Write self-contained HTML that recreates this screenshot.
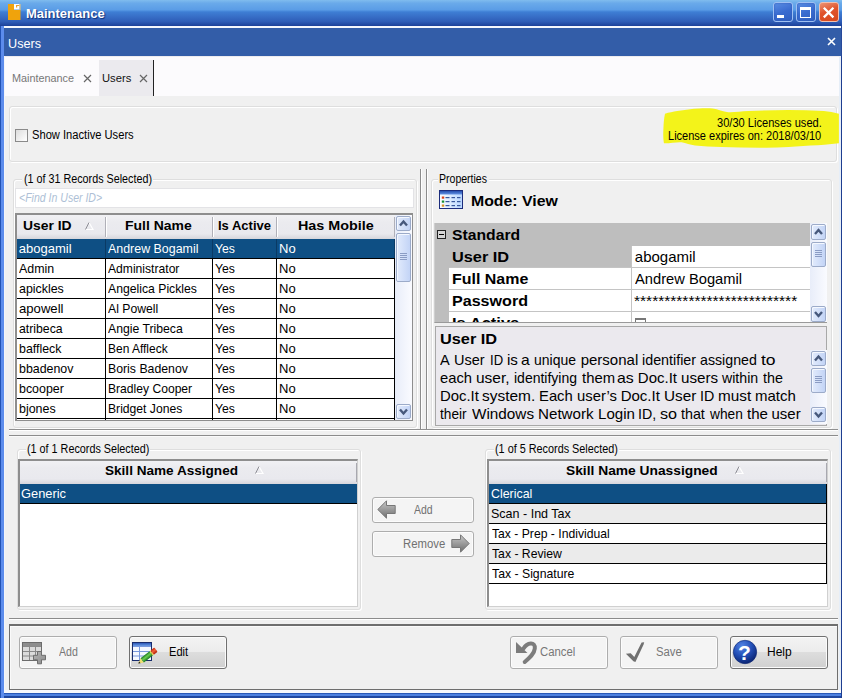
<!DOCTYPE html>
<html><head><meta charset="utf-8"><title>Maintenance</title>
<style>
*{box-sizing:border-box;margin:0;padding:0}
html,body{width:842px;height:698px;overflow:hidden}
body{position:relative;background:#f0f0f0;font-family:"Liberation Sans",sans-serif;font-size:12px;color:#000}
.a{position:absolute}
.t{position:absolute;white-space:nowrap;line-height:1;transform-origin:0 0}
#frame{left:0;top:0;width:842px;height:698px;background:#f0f0f0}
#title{left:0;top:0;width:842px;height:26px;background:linear-gradient(#80bcee 0,#6aaaea 12%,#5a9ce6 38%,#3e7ed4 46%,#3870c8 62%,#2f5eb8 82%,#2149a2 95%,#1c4098 100%)}
#client{left:5px;top:28px;width:834px;height:662px;background:#f0f0f0}
#bluebar{left:3.5px;top:28px;width:837.5px;height:28px;background:#335da8}
#tabs{left:4px;top:56px;width:836px;height:40px;background:#fcfbfd}
.grp{position:absolute;border:1px solid #dedede;border-radius:3px;box-shadow:inset 1px 1px 0 #fff, 1px 1px 0 #fff}
.lbl{position:absolute;background:#f0f0f0;height:12px}
.hdr{position:absolute;background:linear-gradient(#f1f1f4 0,#ebebef 30%,#e9e9ee 78%,#d6d6dc 100%)}
.sb{position:absolute;background:linear-gradient(90deg,#e8edf9,#fafbff)}
.sbb{position:absolute;background:linear-gradient(90deg,#e2ebfc,#c3d4f6);border:1px solid #9cabc9;border-radius:2px;box-shadow:inset 1px 1px 0 #f4f8ff}
.grip{position:absolute;width:7px;height:7px;background:repeating-linear-gradient(#8a9cc4 0 1px,transparent 1px 2px)}
.btn{position:absolute;border:1px solid #adadad;border-radius:3px;background:#f4f4f4;box-shadow:inset 0 0 0 1px #fcfcfc}
.btn.en{border-color:#707070;background:linear-gradient(#f3f3f3 0,#ececec 47%,#dddddd 50%,#d0d0d0 100%);box-shadow:inset 0 0 0 1px #fbfbfb}
</style></head><body>
<div class="a" id="frame"></div>
<div class="a" id="title"></div>
<div class="a" style="left:3.5px;top:26px;width:837.5px;height:2px;background:#f4f7fd"></div>
<div class="a" id="client"></div>
<div class="a" id="bluebar"></div>
<div class="a" id="tabs"></div>
<div class="a" style="left:5px;top:56px;width:834px;height:1px;background:#ecebef"></div>
<div class="a" style="left:0;top:26px;width:3.5px;height:672px;background:linear-gradient(90deg,#2252b4 0,#2252b4 1.2px,#5c8cec 1.4px,#5c8cec 3.5px)"></div>
<div class="a" style="left:3.5px;top:56px;width:1.5px;height:636px;background:#f2f5fb"></div>
<div class="a" style="left:839px;top:56px;width:3px;height:642px;background:linear-gradient(90deg,#e6eef8 0,#e6eef8 1.6px,#1e3e90 1.9px,#1e3e90 3px)"></div>
<div class="a" style="left:840.6px;top:26px;width:1.4px;height:30px;background:#27499a"></div>
<div class="a" style="left:0;top:690px;width:842px;height:8px;background:linear-gradient(#f6f8fc 0,#f6f8fc 2.6px,#2858b8 2.9px,#2858b8 3.6px,#4c80e0 4px,#4c80e0 5.8px,#1f47a0 6.4px,#1f47a0 8px)"></div>
<div class="a" style="left:0;top:690px;width:3.5px;height:8px;background:linear-gradient(90deg,#2252b4 0,#2252b4 1.2px,#5c8cec 1.4px)"></div>
<div class="a" style="left:841px;top:690px;width:1px;height:8px;background:#1e3e90"></div>
<svg class="a" style="left:8px;top:4px" width="13" height="16" viewBox="0 0 13 16"><path d="M0 0h6v6h6.500v10H0z" fill="#f0a30c"/><path d="M6 0h5.500v5.500H6z" fill="#fdfdfd"/><path d="M8 1h3.500v1H9.200v1.500H8z" fill="#e8a030"/><path d="M11.500 0h1v6h-1z" fill="#f6c870"/></svg>
<div class="t" style="left:25.90px;top:7.00px;font-size:13px;font-weight:bold;color:#fff;text-shadow:1px 1px 1px #10307a;">Maintenance</div>
<div class="a" style="left:773px;top:2px;width:20px;height:20px;border:1px solid #9fc0f2;border-radius:3px;background:linear-gradient(160deg,#5a8ee4 0,#3a6cd0 50%,#2f5fc0 100%);box-shadow:inset 0 0 2px #2a55b0"></div>
<div class="a" style="left:796px;top:2px;width:20px;height:20px;border:1px solid #9fc0f2;border-radius:3px;background:linear-gradient(160deg,#5a8ee4 0,#3a6cd0 50%,#2f5fc0 100%);box-shadow:inset 0 0 2px #2a55b0"></div>
<div class="a" style="left:777px;top:15px;width:7px;height:3px;background:#fff"></div>
<div class="a" style="left:800px;top:7px;width:11px;height:11px;border:1px solid #fff;border-top-width:3px"></div>
<div class="a" style="left:819px;top:2px;width:20px;height:20px;border:1px solid #f0c0b0;border-radius:3px;background:linear-gradient(160deg,#ec9474 0,#e0542c 45%,#d8481c 100%)"></div>
<svg class="a" style="left:819px;top:2px" width="20" height="20"><path d="M4.800 5.800l9.600 9.600M14.400 5.800l-9.600 9.600" stroke="#fff" stroke-width="2.300"/></svg>
<div class="t" style="left:7.73px;top:37.00px;font-size:13px;transform:scaleX(0.9727);color:#fff;">Users</div>
<svg class="a" style="left:827px;top:37px" width="9" height="9"><path d="M1 1l7 7M8 1l-7 7" stroke="#fff" stroke-width="1.6"/></svg>
<div class="a" style="left:99px;top:60px;width:54px;height:36px;background:#ebeaee"></div>
<div class="a" style="left:153px;top:60px;width:1px;height:36px;background:#222"></div>
<div class="t" style="left:12.02px;top:72.50px;font-size:11px;transform:scaleX(0.9839);color:#777;">Maintenance</div>
<svg class="a" style="left:83px;top:74px" width="9" height="9"><path d="M1 1l7 7M8 1l-7 7" stroke="#666" stroke-width="1.2"/></svg>
<div class="t" style="left:102.48px;top:72.50px;font-size:11px;transform:scaleX(1.0185);color:#111;">Users</div>
<svg class="a" style="left:139px;top:74px" width="9" height="9"><path d="M1 1l7 7M8 1l-7 7" stroke="#666" stroke-width="1.2"/></svg>
<div class="grp" style="left:9px;top:106px;width:828px;height:56px"></div>
<div class="a" style="left:15px;top:129px;width:13px;height:13px;border:1px solid #8a8a8a;background:linear-gradient(135deg,#dcdcdc,#fff)"></div>
<div class="t" style="left:31.67px;top:129.00px;font-size:12px;transform:scaleX(0.9296);">Show Inactive Users</div>
<svg class="a" style="left:660px;top:104px" width="182" height="48" viewBox="660 104 182 48"><path d="M665 113.800C669 112.500 673 111.800 677.200 111.100C685 109.800 692 108.700 699.400 108.400C704 108.200 708 108.200 712.700 108.400C718 109 723 111.800 728.300 112.200C735 112.400 741 111.400 748.300 111.100C761 110.500 775 110.200 788.200 110C800 110 812 110.500 823.800 111.100C829 111.600 834 112.600 838.900 113.800L838.900 143.300C829 144.500 820 145.200 810.500 145.500C796 146.500 781 147.500 766 147.700C751 147.800 736 147.500 721.600 147.100C712 146.800 703 146.400 695 145.500C690 144.800 686 143 681.600 142.200C676 141.800 670 143.500 663.900 143.300C663 138 663.200 133 663.400 128.900C663.600 124 664 118 665 113.800Z" fill="#f3f31a"/></svg>
<div class="t" style="left:716.68px;top:117.00px;font-size:12px;transform:scaleX(0.9243);">30/30 Licenses used.</div>
<div class="t" style="left:667.98px;top:130.00px;font-size:12px;transform:scaleX(0.9188);">License expires on: 2018/03/10</div>
<div class="grp" style="left:13px;top:179px;width:404px;height:249px"></div>
<div class="lbl" style="left:22px;top:173px;width:131px"></div>
<div class="t" style="left:23.70px;top:173.00px;font-size:12px;transform:scaleX(0.8965);">(1 of 31 Records Selected)</div>
<div class="a" style="left:15px;top:188px;width:399px;height:20px;background:#fff;border:1px solid #e3e3e6"></div>
<div class="t" style="left:18.92px;top:192.00px;font-size:12px;transform:scaleX(0.8777);font-style:italic;color:#aebfd6;">&lt;Find In User ID&gt;</div>
<div class="a" style="left:15px;top:213px;width:398px;height:208px;background:#fff;border:1px solid #8e8e8e;border-top:2px solid #8e8e8e;border-left:2px solid #8e8e8e"></div>
<div class="hdr" style="left:17px;top:215px;width:378px;height:24px"></div>
<div class="a" style="left:105px;top:217px;width:1px;height:20px;background:#b0b0b8"></div>
<div class="a" style="left:106px;top:217px;width:1px;height:20px;background:#fff"></div>
<div class="a" style="left:212px;top:217px;width:1px;height:20px;background:#b0b0b8"></div>
<div class="a" style="left:213px;top:217px;width:1px;height:20px;background:#fff"></div>
<div class="a" style="left:276px;top:217px;width:1px;height:20px;background:#b0b0b8"></div>
<div class="a" style="left:277px;top:217px;width:1px;height:20px;background:#fff"></div>
<div class="a" style="left:394px;top:217px;width:1px;height:20px;background:#b0b0b8"></div>
<div class="a" style="left:395px;top:217px;width:1px;height:20px;background:#fff"></div>
<div class="t" style="left:22.93px;top:219.00px;font-size:13px;transform:scaleX(1.0682);font-weight:bold;">User ID</div>
<div class="t" style="left:125.43px;top:219.00px;font-size:13px;transform:scaleX(1.0738);font-weight:bold;">Full Name</div>
<div class="t" style="left:218.00px;top:219.00px;font-size:13px;font-weight:bold;">Is Active</div>
<div class="t" style="left:297.90px;top:219.00px;font-size:13px;transform:scaleX(1.1045);font-weight:bold;">Has Mobile</div>
<svg class="a" style="left:84px;top:220.500px" width="10" height="10"><path d="M5 1.500L9 8.500H1.500" fill="none" stroke="#fff" stroke-width="1.200"/><path d="M1.500 8.500L5 1.500" fill="none" stroke="#8c8c94" stroke-width="1"/></svg>
<div class="a" style="left:17px;top:239px;width:378px;height:19px;background:#0e4f84"></div>
<div class="a" style="left:17px;top:258px;width:378px;height:1px;background:#000"></div>
<div class="t" style="left:18.80px;top:242.00px;font-size:13px;color:#fff;">abogamil</div>
<div class="t" style="left:107.90px;top:242.00px;font-size:13px;transform:scaleX(0.9553);color:#fff;">Andrew Bogamil</div>
<div class="t" style="left:214.66px;top:242.00px;font-size:13px;transform:scaleX(0.9400);color:#fff;">Yes</div>
<div class="t" style="left:279.00px;top:242.00px;font-size:13px;color:#fff;">No</div>
<div class="a" style="left:17px;top:278px;width:378px;height:1px;background:#000"></div>
<div class="t" style="left:18.90px;top:262.00px;font-size:13px;transform:scaleX(0.9528);">Admin</div>
<div class="t" style="left:107.90px;top:262.00px;font-size:13px;transform:scaleX(0.9325);">Administrator</div>
<div class="t" style="left:214.66px;top:262.00px;font-size:13px;transform:scaleX(0.9400);">Yes</div>
<div class="t" style="left:279.00px;top:262.00px;font-size:13px;">No</div>
<div class="a" style="left:17px;top:298px;width:378px;height:1px;background:#000"></div>
<div class="t" style="left:18.85px;top:282.00px;font-size:13px;transform:scaleX(0.9543);">apickles</div>
<div class="t" style="left:107.90px;top:282.00px;font-size:13px;transform:scaleX(0.9394);">Angelica Pickles</div>
<div class="t" style="left:214.66px;top:282.00px;font-size:13px;transform:scaleX(0.9400);">Yes</div>
<div class="t" style="left:279.00px;top:282.00px;font-size:13px;">No</div>
<div class="a" style="left:17px;top:318px;width:378px;height:1px;background:#000"></div>
<div class="t" style="left:18.79px;top:302.00px;font-size:13px;transform:scaleX(1.0095);">apowell</div>
<div class="t" style="left:107.90px;top:302.00px;font-size:13px;transform:scaleX(0.9396);">Al Powell</div>
<div class="t" style="left:214.66px;top:302.00px;font-size:13px;transform:scaleX(0.9400);">Yes</div>
<div class="t" style="left:279.00px;top:302.00px;font-size:13px;">No</div>
<div class="a" style="left:17px;top:338px;width:378px;height:1px;background:#000"></div>
<div class="t" style="left:18.86px;top:322.00px;font-size:13px;transform:scaleX(0.9422);">atribeca</div>
<div class="t" style="left:107.90px;top:322.00px;font-size:13px;transform:scaleX(0.9405);">Angie Tribeca</div>
<div class="t" style="left:214.66px;top:322.00px;font-size:13px;transform:scaleX(0.9400);">Yes</div>
<div class="t" style="left:279.00px;top:322.00px;font-size:13px;">No</div>
<div class="a" style="left:17px;top:358px;width:378px;height:1px;background:#000"></div>
<div class="t" style="left:18.85px;top:342.00px;font-size:13px;transform:scaleX(0.9512);">baffleck</div>
<div class="t" style="left:107.88px;top:342.00px;font-size:13px;transform:scaleX(0.9203);">Ben Affleck</div>
<div class="t" style="left:214.66px;top:342.00px;font-size:13px;transform:scaleX(0.9400);">Yes</div>
<div class="t" style="left:279.00px;top:342.00px;font-size:13px;">No</div>
<div class="a" style="left:17px;top:378px;width:378px;height:1px;background:#000"></div>
<div class="t" style="left:18.85px;top:362.00px;font-size:13px;transform:scaleX(0.9536);">bbadenov</div>
<div class="t" style="left:107.86px;top:362.00px;font-size:13px;transform:scaleX(0.9446);">Boris Badenov</div>
<div class="t" style="left:214.66px;top:362.00px;font-size:13px;transform:scaleX(0.9400);">Yes</div>
<div class="t" style="left:279.00px;top:362.00px;font-size:13px;">No</div>
<div class="a" style="left:17px;top:398px;width:378px;height:1px;background:#000"></div>
<div class="t" style="left:18.85px;top:382.00px;font-size:13px;transform:scaleX(0.9543);">bcooper</div>
<div class="t" style="left:107.87px;top:382.00px;font-size:13px;transform:scaleX(0.9315);">Bradley Cooper</div>
<div class="t" style="left:214.66px;top:382.00px;font-size:13px;transform:scaleX(0.9400);">Yes</div>
<div class="t" style="left:279.00px;top:382.00px;font-size:13px;">No</div>
<div class="a" style="left:17px;top:418px;width:378px;height:1px;background:#000"></div>
<div class="t" style="left:18.84px;top:402.00px;font-size:13px;transform:scaleX(0.9568);">bjones</div>
<div class="t" style="left:107.87px;top:402.00px;font-size:13px;transform:scaleX(0.9346);">Bridget Jones</div>
<div class="t" style="left:214.66px;top:402.00px;font-size:13px;transform:scaleX(0.9400);">Yes</div>
<div class="t" style="left:279.00px;top:402.00px;font-size:13px;">No</div>
<div class="a" style="left:105px;top:259px;width:1px;height:161px;background:#000"></div>
<div class="a" style="left:105px;top:239px;width:1px;height:19px;background:#0a3a64"></div>
<div class="a" style="left:212px;top:259px;width:1px;height:161px;background:#000"></div>
<div class="a" style="left:212px;top:239px;width:1px;height:19px;background:#0a3a64"></div>
<div class="a" style="left:276px;top:259px;width:1px;height:161px;background:#000"></div>
<div class="a" style="left:276px;top:239px;width:1px;height:19px;background:#0a3a64"></div>
<div class="a" style="left:394px;top:259px;width:1px;height:161px;background:#000"></div>
<div class="a" style="left:394px;top:239px;width:1px;height:19px;background:#0a3a64"></div>
<div class="sb" style="left:395px;top:215px;width:17px;height:205px"></div>
<div class="sbb" style="left:396px;top:216px;width:15px;height:15px"></div>
<svg class="a" style="left:396px;top:216px" width="15" height="15"><path d="M4 9.5l3.5-4 3.5 4" fill="none" stroke="#47597c" stroke-width="2.400"/></svg>
<div class="sbb" style="left:396px;top:233px;width:15px;height:49px"></div>
<div class="grip" style="left:400px;top:253px"></div>
<div class="sbb" style="left:396px;top:404px;width:15px;height:15px"></div>
<svg class="a" style="left:396px;top:404px" width="15" height="15"><path d="M4 5.5l3.5 4 3.5-4" fill="none" stroke="#47597c" stroke-width="2.400"/></svg>
<div class="a" style="left:420px;top:169px;width:2px;height:260px;background:linear-gradient(90deg,#8c8c8c 50%,#fff 50%)"></div>
<div class="a" style="left:426px;top:169px;width:2px;height:260px;background:linear-gradient(90deg,#8c8c8c 50%,#fff 50%)"></div>
<div class="a" style="left:9px;top:429px;width:829px;height:2px;background:linear-gradient(#909090 50%,#fff 50%)"></div>
<div class="a" style="left:9px;top:435px;width:829px;height:2px;background:linear-gradient(#8c8c8c 50%,#fafafa 50%)"></div>
<div class="grp" style="left:431px;top:179px;width:401px;height:249px"></div>
<div class="lbl" style="left:438px;top:173px;width:51px"></div>
<div class="t" style="left:439.12px;top:173.00px;font-size:12px;transform:scaleX(0.8774);">Properties</div>
<svg class="a" style="left:439px;top:190px" width="24" height="19" viewBox="0 0 24 19"><defs><linearGradient id="mh" x1="0" y1="0" x2="0" y2="1"><stop offset="0" stop-color="#2850b0"/><stop offset="1" stop-color="#6494e4"/></linearGradient><linearGradient id="mb" x1="0" y1="0" x2="1" y2="0"><stop offset="0" stop-color="#ffffff"/><stop offset="1" stop-color="#b8d6ff"/></linearGradient></defs><rect x="0.5" y="0.5" width="23" height="18" fill="url(#mb)" stroke="#1c2c7c"/><rect x="1" y="1" width="22" height="3.500" fill="url(#mh)"/><g fill="#38589c"><rect x="6.500" y="7" width="4" height="1.200"/><rect x="12.500" y="7" width="3.500" height="1.200"/><rect x="18" y="7" width="3.500" height="1.200"/><rect x="6.500" y="11" width="4" height="1.200"/><rect x="12.500" y="11" width="3.500" height="1.200"/><rect x="18" y="11" width="3.500" height="1.200"/><rect x="6.500" y="15" width="4" height="1.200"/><rect x="12.500" y="15" width="3.500" height="1.200"/><rect x="18" y="15" width="3.500" height="1.200"/></g><rect x="2.800" y="6.500" width="2.400" height="2.200" fill="#d84018"/><rect x="2.800" y="10.500" width="2.400" height="2.200" fill="#189030"/><rect x="2.800" y="14.500" width="2.400" height="2.200" fill="#d89020"/></svg>
<div class="t" style="left:470.94px;top:193.00px;font-size:15px;transform:scaleX(1.0556);font-weight:bold;">Mode: View</div>
<div class="a" style="left:434px;top:223px;width:393px;height:100px;background:#bebebe;border-bottom:1px solid #9a9a9a;border-right:1px solid #9a9a9a;border-left:1px solid #cfcfcf"></div>
<div class="a" style="left:449px;top:268px;width:361px;height:54px;background:#fff"></div>
<div class="a" style="left:632px;top:246px;width:178px;height:22px;background:#fff"></div>
<div class="a" style="left:449px;top:267px;width:361px;height:1px;background:#c4c4c4"></div>
<div class="a" style="left:449px;top:289px;width:361px;height:1px;background:#c4c4c4"></div>
<div class="a" style="left:449px;top:311px;width:361px;height:1px;background:#c4c4c4"></div>
<div class="a" style="left:631px;top:246px;width:1px;height:76px;background:#c4c4c4"></div>
<div class="a" style="left:437px;top:230px;width:9px;height:9px;border:1px solid #222;background:#d6d6d6"></div>
<div class="a" style="left:439px;top:234px;width:5px;height:1px;background:#000"></div>
<div class="t" style="left:451.95px;top:227.00px;font-size:15px;transform:scaleX(1.0476);font-weight:bold;">Standard</div>
<div class="t" style="left:451.91px;top:249.00px;font-size:15px;transform:scaleX(1.0882);font-weight:bold;">User ID</div>
<div class="t" style="left:451.94px;top:271.00px;font-size:15px;transform:scaleX(1.0643);font-weight:bold;">Full Name</div>
<div class="t" style="left:451.93px;top:293.00px;font-size:15px;transform:scaleX(1.0725);font-weight:bold;">Password</div>
<div class="a" style="left:449px;top:312px;width:182px;height:10px;overflow:hidden">
<div class="t" style="left:2.90px;top:3.00px;font-size:15px;transform:scaleX(1.1000);font-weight:bold;">Is Active</div>
</div>
<div class="t" style="left:634.80px;top:249.00px;font-size:15px;">abogamil</div>
<div class="t" style="left:635.20px;top:271.00px;font-size:15px;transform:scaleX(0.9798);">Andrew Bogamil</div>
<div class="t" style="left:633.96px;top:293.00px;font-size:15px;transform:scaleX(1.0353);">***************************</div>
<div class="a" style="left:635px;top:318px;width:11px;height:4px;border:1px solid #777;border-bottom:0;border-top-width:2px;background:#fff"></div>
<div class="sb" style="left:810px;top:223px;width:17px;height:99px"></div>
<div class="sbb" style="left:811px;top:224px;width:15px;height:16px"></div>
<svg class="a" style="left:811px;top:224px" width="15" height="16"><path d="M4 10.0l3.5-4 3.5 4" fill="none" stroke="#47597c" stroke-width="2.400"/></svg>
<div class="sbb" style="left:811px;top:242px;width:15px;height:25px"></div>
<div class="grip" style="left:815px;top:250px"></div>
<div class="sbb" style="left:811px;top:306px;width:15px;height:16px"></div>
<svg class="a" style="left:811px;top:306px" width="15" height="16"><path d="M4 6.0l3.5 4 3.5-4" fill="none" stroke="#47597c" stroke-width="2.400"/></svg>
<div class="a" style="left:435px;top:326px;width:392px;height:100px;background:#ebe9ee;border:1px solid #a8a8a8"></div>
<div class="t" style="left:439.91px;top:331.00px;font-size:15px;transform:scaleX(1.0882);font-weight:bold;">User ID</div>
<div>
<div class="t" style="left:440.10px;top:352.00px;font-size:15px;transform:scaleX(0.9700);">A</div>
<div class="t" style="left:453.93px;top:352.00px;font-size:15px;transform:scaleX(0.9677);">User</div>
<div class="t" style="left:489.53px;top:352.00px;font-size:15px;transform:scaleX(0.8714);">ID</div>
<div class="t" style="left:506.69px;top:352.00px;font-size:15px;transform:scaleX(1.0111);">is</div>
<div class="t" style="left:521.46px;top:352.00px;font-size:15px;transform:scaleX(1.0429);">a</div>
<div class="t" style="left:534.07px;top:352.00px;font-size:15px;transform:scaleX(0.9318);">unique</div>
<div class="t" style="left:580.70px;top:352.00px;font-size:15px;">personal</div>
<div class="t" style="left:641.65px;top:352.00px;font-size:15px;transform:scaleX(0.9536);">identifier</div>
<div class="t" style="left:699.55px;top:352.00px;font-size:15px;transform:scaleX(0.9466);">assigned</div>
<div class="t" style="left:760.70px;top:352.00px;font-size:15px;transform:scaleX(1.1667);">to</div>
</div>
<div>
<div class="t" style="left:439.62px;top:370.00px;font-size:15px;transform:scaleX(0.9839);">each</div>
<div class="t" style="left:475.67px;top:370.00px;font-size:15px;transform:scaleX(1.0333);">user,</div>
<div class="t" style="left:514.07px;top:370.00px;font-size:15px;transform:scaleX(0.9333);">identifying</div>
<div class="t" style="left:581.70px;top:370.00px;font-size:15px;transform:scaleX(0.9906);">them</div>
<div class="t" style="left:617.34px;top:370.00px;font-size:15px;transform:scaleX(1.0571);">as</div>
<div class="t" style="left:637.80px;top:370.00px;font-size:15px;">Doc.It</div>
<div class="t" style="left:681.19px;top:370.00px;font-size:15px;transform:scaleX(1.0114);">users</div>
<div class="t" style="left:722.40px;top:370.00px;font-size:15px;transform:scaleX(0.9421);">within</div>
<div class="t" style="left:762.90px;top:370.00px;font-size:15px;transform:scaleX(0.9550);">the</div>
</div>
<div>
<div class="t" style="left:439.61px;top:388.00px;font-size:15px;transform:scaleX(0.9921);">Doc.It</div>
<div class="t" style="left:482.47px;top:388.00px;font-size:15px;transform:scaleX(1.0306);">system.</div>
<div class="t" style="left:538.81px;top:388.00px;font-size:15px;transform:scaleX(0.9875);">Each</div>
<div class="t" style="left:576.61px;top:388.00px;font-size:15px;transform:scaleX(0.9897);">user’s</div>
<div class="t" style="left:620.70px;top:388.00px;font-size:15px;">Doc.It</div>
<div class="t" style="left:663.58px;top:388.00px;font-size:15px;transform:scaleX(1.0194);">User</div>
<div class="t" style="left:699.65px;top:388.00px;font-size:15px;transform:scaleX(0.9500);">ID</div>
<div class="t" style="left:717.78px;top:388.00px;font-size:15px;transform:scaleX(1.0194);">must</div>
<div class="t" style="left:755.00px;top:388.00px;font-size:15px;">match</div>
</div>
<div>
<div class="t" style="left:440.20px;top:406.00px;font-size:15px;transform:scaleX(0.9103);">their</div>
<div class="t" style="left:472.20px;top:406.00px;font-size:15px;transform:scaleX(1.0200);">Windows</div>
<div class="t" style="left:538.19px;top:406.00px;font-size:15px;transform:scaleX(1.0111);">Network</div>
<div class="t" style="left:598.19px;top:406.00px;font-size:15px;transform:scaleX(1.0057);">Login</div>
<div class="t" style="left:638.15px;top:406.00px;font-size:15px;transform:scaleX(0.9471);">ID,</div>
<div class="t" style="left:660.22px;top:406.00px;font-size:15px;transform:scaleX(1.0786);">so</div>
<div class="t" style="left:681.10px;top:406.00px;font-size:15px;transform:scaleX(0.9520);">that</div>
<div class="t" style="left:709.70px;top:406.00px;font-size:15px;transform:scaleX(0.9143);">when</div>
<div class="t" style="left:747.40px;top:406.00px;font-size:15px;transform:scaleX(1.0050);">the</div>
<div class="t" style="left:771.50px;top:406.00px;font-size:15px;">user</div>
</div>
<div class="sb" style="left:810px;top:350px;width:17px;height:74px"></div>
<div class="sbb" style="left:811px;top:351px;width:15px;height:15px"></div>
<svg class="a" style="left:811px;top:351px" width="15" height="15"><path d="M4 9.5l3.5-4 3.5 4" fill="none" stroke="#47597c" stroke-width="2.400"/></svg>
<div class="sbb" style="left:811px;top:368px;width:15px;height:25px"></div>
<div class="grip" style="left:815px;top:376px"></div>
<div class="sbb" style="left:811px;top:407px;width:15px;height:15px"></div>
<svg class="a" style="left:811px;top:407px" width="15" height="15"><path d="M4 5.5l3.5 4 3.5-4" fill="none" stroke="#47597c" stroke-width="2.400"/></svg>
<div class="grp" style="left:17px;top:449px;width:344px;height:161px"></div>
<div class="lbl" style="left:25.5px;top:443px;width:124.5px"></div>
<div class="t" style="left:26.60px;top:443.00px;font-size:12px;transform:scaleX(0.8993);">(1 of 1 Records Selected)</div>
<div class="a" style="left:18px;top:459px;width:340px;height:148px;background:#fff;border:1px solid #d0d0d0;border-top:2px solid #8e8e8e;border-left:2px solid #8e8e8e"></div>
<div class="hdr" style="left:20px;top:461px;width:337px;height:23px"></div>
<div class="a" style="left:356px;top:463px;width:1px;height:19px;background:#a8a8b0"></div>
<div class="t" style="left:105.46px;top:464.00px;font-size:13px;transform:scaleX(1.0437);font-weight:bold;">Skill Name Assigned</div>
<svg class="a" style="left:254px;top:465px" width="10" height="10"><path d="M5 1.500L9 8.500H1.500" fill="none" stroke="#fff" stroke-width="1.200"/><path d="M1.500 8.500L5 1.500" fill="none" stroke="#8c8c94" stroke-width="1"/></svg>
<div class="a" style="left:20px;top:484px;width:337px;height:19px;background:#0e4f84"></div>
<div class="a" style="left:20px;top:503px;width:337px;height:1px;background:#000"></div>
<div class="t" style="left:21.01px;top:487.00px;font-size:13px;transform:scaleX(0.9886);color:#fff;">Generic</div>
<div class="grp" style="left:485px;top:449px;width:346px;height:161px"></div>
<div class="lbl" style="left:494px;top:443px;width:125px"></div>
<div class="t" style="left:495.10px;top:443.00px;font-size:12px;transform:scaleX(0.9030);">(1 of 5 Records Selected)</div>
<div class="a" style="left:487px;top:459px;width:341px;height:148px;background:#fff;border:1px solid #d0d0d0;border-top:2px solid #8e8e8e;border-left:2px solid #8e8e8e"></div>
<div class="hdr" style="left:489px;top:461px;width:338px;height:23px"></div>
<div class="a" style="left:826px;top:463px;width:1px;height:19px;background:#a8a8b0"></div>
<div class="t" style="left:566.44px;top:464.00px;font-size:13px;transform:scaleX(1.0603);font-weight:bold;">Skill Name Unassigned</div>
<svg class="a" style="left:734px;top:465px" width="10" height="10"><path d="M5 1.500L9 8.500H1.500" fill="none" stroke="#fff" stroke-width="1.200"/><path d="M1.500 8.500L5 1.500" fill="none" stroke="#8c8c94" stroke-width="1"/></svg>
<div class="a" style="left:489px;top:484px;width:338px;height:19px;background:#0e4f84"></div>
<div class="a" style="left:489px;top:503px;width:338px;height:1px;background:#000"></div>
<div class="a" style="left:826px;top:484px;width:1px;height:19px;background:#000"></div>
<div class="t" style="left:490.55px;top:487.00px;font-size:13px;transform:scaleX(0.9524);color:#fff;">Clerical</div>
<div class="a" style="left:489px;top:504px;width:338px;height:19px;background:#ebebeb"></div>
<div class="a" style="left:489px;top:523px;width:338px;height:1px;background:#000"></div>
<div class="a" style="left:826px;top:504px;width:1px;height:19px;background:#000"></div>
<div class="t" style="left:490.54px;top:507.00px;font-size:13px;transform:scaleX(0.9630);">Scan - Ind Tax</div>
<div class="a" style="left:489px;top:543px;width:338px;height:1px;background:#000"></div>
<div class="a" style="left:826px;top:524px;width:1px;height:19px;background:#000"></div>
<div class="t" style="left:491.50px;top:527.00px;font-size:13px;transform:scaleX(0.9360);">Tax - Prep - Individual</div>
<div class="a" style="left:489px;top:544px;width:338px;height:19px;background:#ebebeb"></div>
<div class="a" style="left:489px;top:563px;width:338px;height:1px;background:#000"></div>
<div class="a" style="left:826px;top:544px;width:1px;height:19px;background:#000"></div>
<div class="t" style="left:491.50px;top:547.00px;font-size:13px;transform:scaleX(0.9392);">Tax - Review</div>
<div class="a" style="left:489px;top:583px;width:338px;height:1px;background:#000"></div>
<div class="a" style="left:826px;top:564px;width:1px;height:19px;background:#000"></div>
<div class="t" style="left:491.50px;top:567.00px;font-size:13px;transform:scaleX(0.9425);">Tax - Signature</div>
<div class="btn" style="left:372px;top:497px;width:102px;height:26px"></div>
<svg class="a" style="left:377px;top:500px" width="19" height="19" viewBox="0 0 19 19"><defs><linearGradient id="ga" x1="0" y1="0" x2="0" y2="1"><stop offset="0" stop-color="#c8c8c8"/><stop offset="1" stop-color="#6e6e6e"/></linearGradient></defs><path d="M0.8 9.5L9.5 0.8V5.5H18.2V13.5H9.5V18.2Z" fill="url(#ga)" stroke="#777" stroke-width="1"/></svg>
<div class="t" style="left:414.30px;top:504.00px;font-size:12px;transform:scaleX(0.8714);color:#707070;">Add</div>
<div class="btn" style="left:372px;top:531px;width:102px;height:26px"></div>
<svg class="a" style="left:451px;top:534px" width="19" height="19" viewBox="0 0 19 19"><path d="M18.2 9.5L9.5 0.8V5.5H0.8V13.5H9.5V18.2Z" fill="url(#ga)" stroke="#777" stroke-width="1"/></svg>
<div class="t" style="left:402.55px;top:538.00px;font-size:12px;transform:scaleX(0.9465);color:#707070;">Remove</div>
<div class="a" style="left:9px;top:618px;width:829px;height:2px;background:linear-gradient(#8c8c8c 50%,#fff 50%)"></div>
<div class="a" style="left:9px;top:624px;width:829px;height:66px;border:1px solid #6e6e6e;border-top:2px solid #6e6e6e;background:#f0f0f0;box-shadow:inset 1px 1px 0 #fafafa"></div>
<div class="btn" style="left:19px;top:636px;width:98px;height:33px"></div>
<div class="t" style="left:59.00px;top:646.00px;font-size:12px;transform:scaleX(0.8810);color:#777;">Add</div>
<div class="btn en" style="left:129px;top:636px;width:98px;height:33px"></div>
<div class="t" style="left:168.57px;top:646.00px;font-size:12px;transform:scaleX(0.9250);">Edit</div>
<div class="btn" style="left:510px;top:636px;width:98px;height:33px"></div>
<div class="t" style="left:540.06px;top:646.00px;font-size:12px;transform:scaleX(0.9444);color:#777;">Cancel</div>
<div class="btn" style="left:620px;top:636px;width:98px;height:33px"></div>
<div class="t" style="left:656.06px;top:646.00px;font-size:12px;transform:scaleX(0.9423);color:#777;">Save</div>
<div class="btn en" style="left:730px;top:636px;width:98px;height:33px"></div>
<div class="t" style="left:767.00px;top:646.00px;font-size:12px;">Help</div>
<svg class="a" style="left:20px;top:640px" width="28" height="26" viewBox="20 640 28 26"><defs><linearGradient id="gp" x1="0" y1="0" x2="1" y2="1"><stop offset="0" stop-color="#b4b4b4"/><stop offset="1" stop-color="#8c8c8c"/></linearGradient></defs><rect x="22.500" y="642.500" width="19" height="18" fill="#dcdcdc" stroke="#6c6c6c"/><rect x="23" y="643" width="18" height="3" fill="#8e8e8e"/><path d="M23 646.500h18M23 651.500h18M23 656h18M29.500 643v17M35.500 646v14" stroke="#8a8a8a" stroke-width="1"/><path d="M37.500 651.500h4v3.800h4v4.500h-4v4h-4v-4h-4v-4.500h4z" fill="url(#gp)" stroke="#6e6e6e" stroke-width="1"/></svg>
<svg class="a" style="left:130px;top:640px" width="30" height="27" viewBox="130 640 30 27"><defs><linearGradient id="gt" x1="0" y1="0" x2="0" y2="1"><stop offset="0" stop-color="#2c58b8"/><stop offset="1" stop-color="#6c9ce4"/></linearGradient><linearGradient id="gg" x1="0" y1="0" x2="0" y2="1"><stop offset="0" stop-color="#1c7a24"/><stop offset="0.450" stop-color="#6cd050"/><stop offset="1" stop-color="#147020"/></linearGradient><linearGradient id="gr" x1="0" y1="0" x2="0" y2="1"><stop offset="0" stop-color="#c82c10"/><stop offset="0.450" stop-color="#f46038"/><stop offset="1" stop-color="#b02008"/></linearGradient></defs><rect x="132.500" y="642.500" width="19" height="18" fill="#f4f8ff" stroke="#182c6c"/><rect x="133" y="643" width="18" height="3" fill="url(#gt)"/><path d="M133 646.500h18M133 651.500h18M133 656h18M139.500 646v14" stroke="#7898dc" stroke-width="1"/><g transform="translate(138.300,663.600) rotate(-38.500)"><path d="M0 0L5 -2.700V2.700Z" fill="#f0e070"/><path d="M0 0L2 -1.100V1.100Z" fill="#181818"/><rect x="5" y="-2.700" width="11.500" height="5.400" fill="url(#gg)"/><rect x="16.500" y="-2.700" width="1.200" height="5.400" fill="#e8d040"/><rect x="17.700" y="-2.700" width="4.800" height="5.400" rx="0.800" fill="url(#gr)"/></g></svg>
<svg class="a" style="left:512px;top:638px" width="28" height="28" viewBox="512 638 28 28"><path d="M516 642V653H527.500Z" fill="#7c7c7c"/><path d="M523.500 648.500C527 642.500 535.500 641 534.800 648.500C534.300 654 529.500 658 524.700 662" fill="none" stroke="#7c7c7c" stroke-width="4" stroke-linecap="round"/></svg>
<svg class="a" style="left:622px;top:638px" width="28" height="28" viewBox="622 638 28 28"><path d="M625.900 653.700L630.700 653.300L634.300 657L641.600 642.500L644.200 642.200L643.600 644.500L635.400 662L633.400 661.200Z" fill="#707070"/></svg>
<svg class="a" style="left:732px;top:639px" width="26" height="26" viewBox="732 639 26 26"><defs><radialGradient id="gh" cx="0.380" cy="0.250" r="0.800"><stop offset="0" stop-color="#5484e4"/><stop offset="0.500" stop-color="#2450b8"/><stop offset="1" stop-color="#08206c"/></radialGradient></defs><circle cx="745" cy="652" r="11.700" fill="url(#gh)" stroke="#0a2470" stroke-width="0.600"/><text x="744.300" y="659.800" text-anchor="middle" font-family="Liberation Sans,sans-serif" font-weight="bold" font-size="21" fill="#fff">?</text></svg>
</body></html>
